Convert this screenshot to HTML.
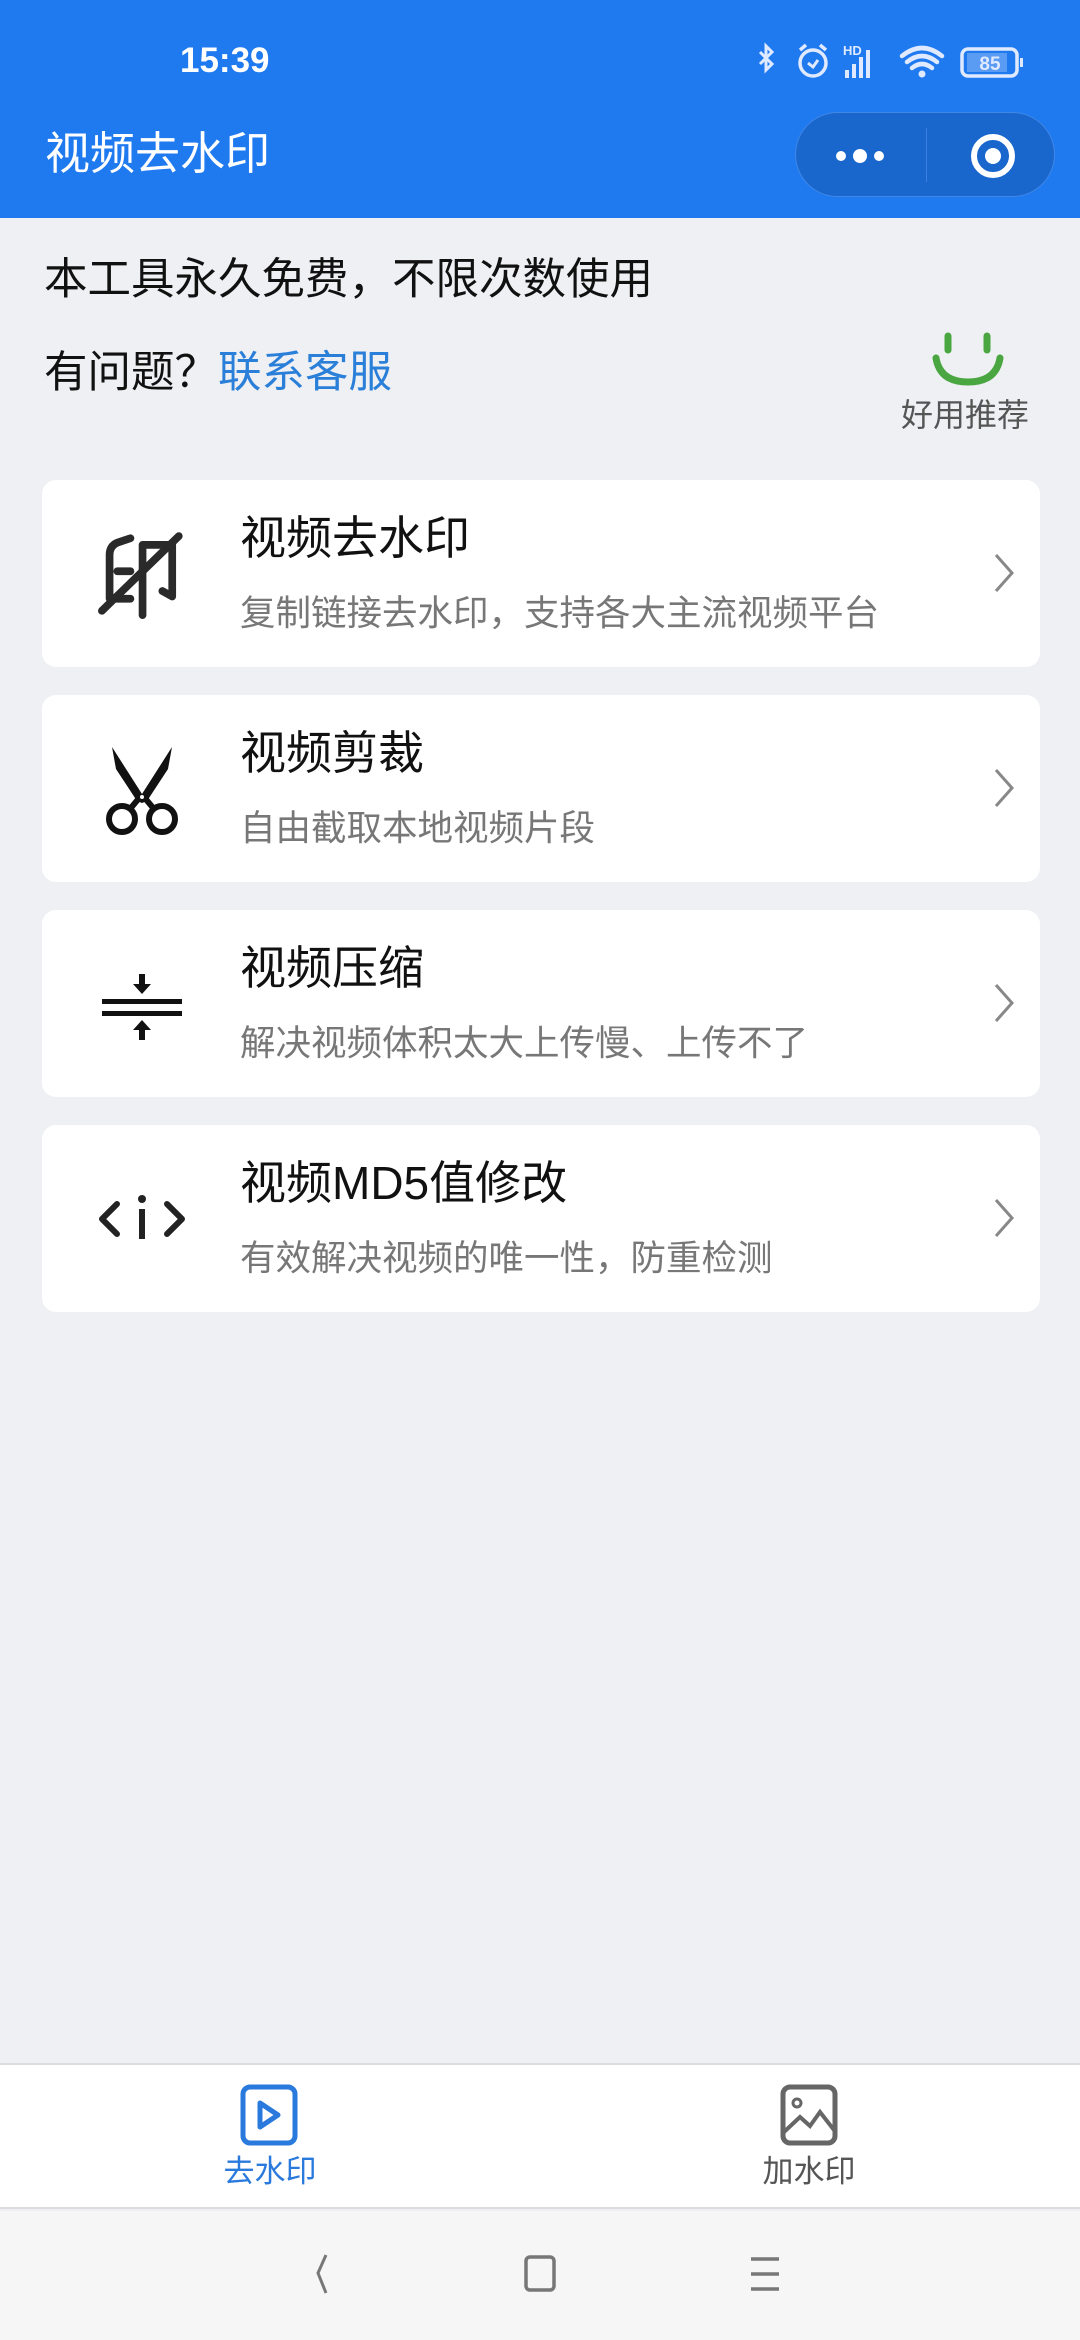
<!DOCTYPE html>
<html><head><meta charset="utf-8">
<style>
*{margin:0;padding:0;box-sizing:border-box}
body{width:1080px;height:2340px;background:#eff0f4;font-family:"Liberation Sans","Noto Sans CJK SC",sans-serif;position:relative;overflow:hidden}
.abs{position:absolute}
.top{left:0;top:0;width:1080px;height:218px;background:#1f7af0}
.card{position:absolute;left:42px;width:998px;height:187px;background:#fff;border-radius:14px}
.card .t{position:absolute;left:198px;top:30px;font-size:46px;color:#111;line-height:56px}
.card .s{position:absolute;left:198px;top:111px;font-size:35.5px;color:#777;line-height:44px}
.card svg.ic{position:absolute;left:50px;top:44px}
.card svg.ch{position:absolute;right:24px;top:72px}
</style></head><body>
<div class="abs top"></div>
<div class="abs" style="left:180px;top:38px;font-size:35px;color:#fff;font-weight:bold;line-height:46px">15:39</div>
<svg class="abs" style="left:750px;top:38px" width="290" height="50" viewBox="0 0 290 50">
 <path d="M10 14 L22 26 L16 32 V8 L22 14 L10 26" fill="none" stroke="#dfe9ff" stroke-width="3"/>
 <circle cx="63" cy="25" r="13" fill="none" stroke="#dfe9ff" stroke-width="3.5"/>
 <path d="M58 25 L63 29 L68 22" fill="none" stroke="#dfe9ff" stroke-width="3"/>
 <path d="M50 12 L56 7 M76 12 L70 7" stroke="#dfe9ff" stroke-width="3.5"/>
 <text x="93" y="17" font-size="13" font-weight="bold" fill="#dfe9ff" font-family="Liberation Sans">HD</text>
 <rect x="95" y="32" width="4" height="8" fill="#dfe9ff"/><rect x="102" y="26" width="4" height="14" fill="#dfe9ff"/><rect x="109" y="19" width="4" height="21" fill="#dfe9ff"/><rect x="116" y="12" width="4" height="28" fill="#dfe9ff"/>
 <path d="M152 18 Q172 2 192 18 M157 24 Q172 12 187 24 M162 30 Q172 22 182 30" fill="none" stroke="#dfe9ff" stroke-width="4.5" stroke-linecap="round"/>
 <circle cx="172" cy="36" r="3.5" fill="#dfe9ff"/>
 <rect x="212" y="11" width="55" height="27" rx="6" fill="none" stroke="#dfe9ff" stroke-width="3.5"/>
 <rect x="217" y="15" width="40" height="19" fill="#5a9bf3"/>
 <rect x="270" y="20" width="3" height="9" fill="#dfe9ff"/>
 <text x="240" y="32" font-size="19" font-weight="bold" fill="#dfe9ff" text-anchor="middle" font-family="Liberation Sans">85</text>
</svg>
<div class="abs" style="left:45px;top:126px;font-size:45px;color:#fff;line-height:56px">视频去水印</div>
<div class="abs" style="left:795px;top:112px;width:260px;height:85px;border-radius:43px;background:#1966cc;border:1px solid #3f87e6"></div>
<div class="abs" style="left:926px;top:128px;width:1px;height:54px;background:#3a80e0"></div>
<svg class="abs" style="left:830px;top:130px" width="200" height="52">
 <circle cx="11" cy="26" r="5" fill="#fff"/><circle cx="30" cy="26" r="7" fill="#fff"/><circle cx="49" cy="26" r="5" fill="#fff"/>
 <circle cx="163" cy="26" r="19" fill="none" stroke="#fff" stroke-width="6"/><circle cx="163" cy="26" r="8" fill="#fff"/>
</svg>

<div class="abs" style="left:44px;top:252px;font-size:43.5px;color:#111;line-height:56px">本工具永久免费，不限次数使用</div>
<div class="abs" style="left:44px;top:345px;font-size:43.5px;color:#111;line-height:56px">有问题？<span style="color:#2a7fd8">联系客服</span></div>
<svg class="abs" style="left:930px;top:330px" width="76" height="60">
 <path d="M18 6 V20 M57 6 V20" stroke="#4aa640" stroke-width="7" stroke-linecap="round"/>
 <path d="M6 28 Q10 52 38 52 Q66 52 70 28" fill="none" stroke="#4aa640" stroke-width="7" stroke-linecap="round"/>
</svg>
<div class="abs" style="left:901px;top:395px;font-size:32px;color:#555;line-height:40px">好用推荐</div>

<div class="card" style="top:480px">
 <svg class="ic" width="100" height="100" viewBox="17 27 91 91">
  <g fill="none" stroke="#2a2a2a" stroke-width="7" stroke-linecap="round" stroke-linejoin="round">
  <path d="M52 40 L40 44 Q33 47 33 55 L33 95 L52 95"/>
  <path d="M40 70 L52 70"/>
  <path d="M63 110 V46 L90 46 V93 L81 88"/>
  <path d="M96 38 L26 106"/>
  </g>
 </svg>
 <div class="t">视频去水印</div><div class="s">复制链接去水印，支持各大主流视频平台</div>
 <svg class="ch" width="24" height="42"><path d="M4 3 L20 21 L4 39" fill="none" stroke="#888" stroke-width="3"/></svg>
</div>
<div class="card" style="top:695px">
 <svg class="ic" width="100" height="100" viewBox="0 0 100 100">
  <path d="M20 8 L50 55 L80 8 L76 30 L55 62 L50 64 L45 62 L24 30 Z" fill="#111"/>
  <circle cx="30" cy="80" r="13" fill="none" stroke="#111" stroke-width="6"/>
  <circle cx="70" cy="80" r="13" fill="none" stroke="#111" stroke-width="6"/>
  <path d="M38 70 L48 58 M62 70 L52 58" stroke="#111" stroke-width="6"/>
  <circle cx="50" cy="58" r="2" fill="#fff"/>
 </svg>
 <div class="t">视频剪裁</div><div class="s">自由截取本地视频片段</div>
 <svg class="ch" width="24" height="42"><path d="M4 3 L20 21 L4 39" fill="none" stroke="#888" stroke-width="3"/></svg>
</div>
<div class="card" style="top:910px">
 <svg class="ic" width="100" height="100" viewBox="0 0 100 100">
  <rect x="10" y="45" width="80" height="5" fill="#111"/><rect x="10" y="57" width="80" height="5" fill="#111"/>
  <path d="M47 20 h6 v10 h6 l-9 10 l-9 -10 h6z" fill="#111"/>
  <path d="M50 66 l9 10 h-6 v10 h-6 v-10 h-6z" fill="#111"/>
 </svg>
 <div class="t">视频压缩</div><div class="s">解决视频体积太大上传慢、上传不了</div>
 <svg class="ch" width="24" height="42"><path d="M4 3 L20 21 L4 39" fill="none" stroke="#888" stroke-width="3"/></svg>
</div>
<div class="card" style="top:1125px">
 <svg class="ic" width="100" height="100" viewBox="0 0 100 100">
  <path d="M25 35 L10 50 L25 65 M75 35 L90 50 L75 65" fill="none" stroke="#222" stroke-width="6" stroke-linecap="round" stroke-linejoin="round"/>
  <circle cx="50" cy="30" r="4" fill="#222"/><rect x="47" y="40" width="6" height="30" fill="#222"/>
 </svg>
 <div class="t">视频MD5值修改</div><div class="s">有效解决视频的唯一性，防重检测</div>
 <svg class="ch" width="24" height="42"><path d="M4 3 L20 21 L4 39" fill="none" stroke="#888" stroke-width="3"/></svg>
</div>

<div class="abs" style="left:0;top:2063px;width:1080px;height:146px;background:#fff;border-top:2px solid #dcdcdc;border-bottom:2px solid #dcdcdc"></div>
<svg class="abs" style="left:240px;top:2084px" width="58" height="62">
 <rect x="3" y="3" width="52" height="56" rx="7" fill="none" stroke="#2a79dc" stroke-width="5"/>
 <path d="M20 19 V43 L38 31 Z" fill="none" stroke="#2a79dc" stroke-width="5" stroke-linejoin="round"/>
</svg>
<div class="abs" style="left:220px;top:2152px;width:100px;text-align:center;font-size:31px;color:#2a79dc;line-height:40px">去水印</div>
<svg class="abs" style="left:780px;top:2084px" width="58" height="62">
 <rect x="3" y="3" width="52" height="56" rx="7" fill="none" stroke="#666" stroke-width="5"/>
 <circle cx="17" cy="19" r="4" fill="none" stroke="#666" stroke-width="3"/>
 <path d="M4 48 L20 33 L30 42 L40 28 L54 46" fill="none" stroke="#666" stroke-width="4"/>
</svg>
<div class="abs" style="left:757px;top:2152px;width:104px;text-align:center;font-size:31px;color:#555;line-height:40px">加水印</div>

<div class="abs" style="left:0;top:2211px;width:1080px;height:129px;background:#f6f6f6"></div>
<svg class="abs" style="left:300px;top:2250px" width="500" height="50">
 <path d="M26 5 L18 23 L26 43" fill="none" stroke="#777" stroke-width="3"/>
 <rect x="226" y="7" width="28" height="33" rx="4" fill="none" stroke="#777" stroke-width="3.5"/>
 <path d="M451 9 H479 M451 24 H479 M451 39 H479" stroke="#777" stroke-width="3.5"/>
</svg>
</body></html>
